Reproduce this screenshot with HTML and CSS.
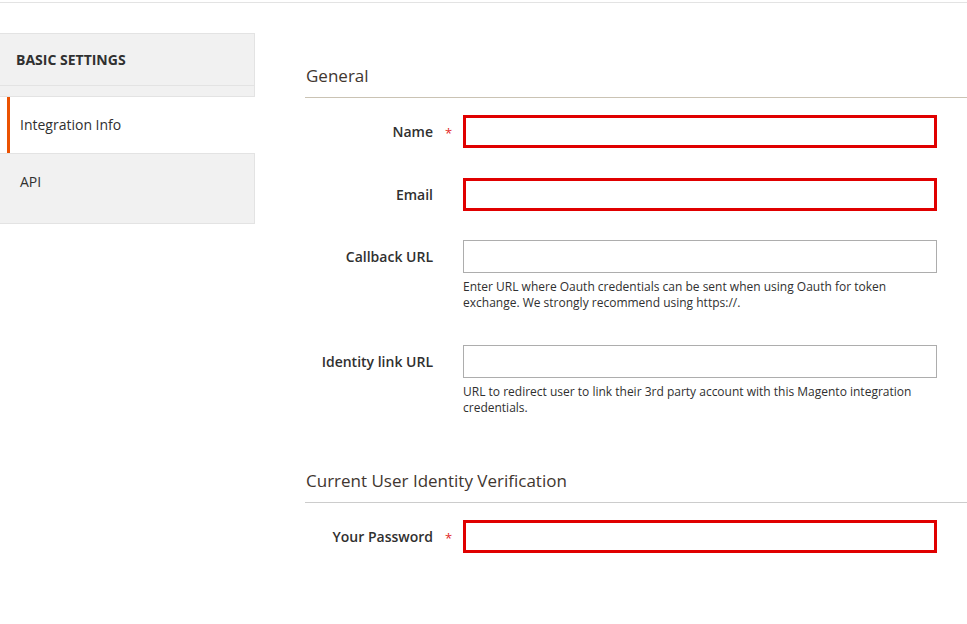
FILE: index.html
```html
<!DOCTYPE html>
<html lang="en">
<head>
<meta charset="utf-8">
<title>Integration Info</title>
<link rel="stylesheet" href="styles.css">
</head>
<body>
<div class="topbar"></div>
<div class="page">
  <aside class="sidebar">
    <div class="side-title">BASIC SETTINGS</div>
    <ul class="side-items">
      <li class="side-item active">Integration Info</li>
      <li class="side-item">API</li>
    </ul>
  </aside>
  <main class="main">
    <section class="section">
      <h2 class="section-title">General</h2>
      <div class="field">
        <label class="label">Name</label>
        <span class="req">*</span>
        <input class="input error" type="text">
      </div>
      <div class="field">
        <label class="label">Email</label>
        <span class="req"></span>
        <input class="input error" type="text">
      </div>
      <div class="field">
        <label class="label">Callback URL</label>
        <span class="req"></span>
        <input class="input" type="text">
        <div class="note">Enter URL where Oauth credentials can be sent when using Oauth for token exchange. We strongly recommend using https://.</div>
      </div>
      <div class="field">
        <label class="label">Identity link URL</label>
        <span class="req"></span>
        <input class="input" type="text">
        <div class="note">URL to redirect user to link their 3rd party account with this Magento integration credentials.</div>
      </div>
    </section>
    <section class="section second">
      <h2 class="section-title">Current User Identity Verification</h2>
      <div class="field">
        <label class="label">Your Password</label>
        <span class="req">*</span>
        <input class="input error" type="password">
      </div>
    </section>
  </main>
</div>
</body>
</html>
```
FILE: styles.css
```css
* { box-sizing: border-box; }
html, body { margin: 0; padding: 0; background: #fff; }
body {
  font-family: "Open Sans", "Liberation Sans", sans-serif;
  color: #303030;
  font-size: 14px;
}
.topbar {
  height: 3px;
  border-bottom: 1px solid #e3e3e3;
}
.page {
  display: flex;
  padding-top: 30px;
}
.sidebar {
  width: 255px;
  flex: none;
}
.side-title {
  height: 53px;
  background: #f1f1f1;
  border: 1px solid #e3e3e3;
  border-left: none;
  padding: 0 0 0 16px;
  display: flex;
  align-items: center;
  font-weight: 700;
  font-size: 14px;
  color: #303030;
  padding-bottom: 1px;
}
.side-items {
  list-style: none;
  margin: 0;
  padding: 10px 0 0;
  background: #f1f1f1;
  border-right: 1px solid #e3e3e3;
  border-bottom: 1px solid #e3e3e3;
}
.side-item {
  position: relative;
  padding-left: 20px;
  font-size: 14px;
  color: #303030;
}
.side-item.active {
  background: #fff;
  height: 57px;
  line-height: 56px;
  border-top: 1px solid #e3e3e3;
  margin-right: -1px;
}
.side-item.active::before {
  content: "";
  position: absolute;
  left: 7px;
  top: 0;
  bottom: 0;
  width: 3px;
  background: #eb5202;
}
.side-item:not(.active) {
  border-top: 1px solid #e3e3e3;
  height: 70px;
  padding-top: 18px;
  line-height: 20px;
}
.main {
  flex: 1;
  margin-left: 50px;
  padding-top: 32px;
}
.section-title {
  margin: 0 0 17px;
  font-size: 17px;
  font-weight: 400;
  line-height: 22px;
  color: #41362f;
  padding: 0 0 10px 1px;
  border-bottom: 1px solid #cac3b4;
}
.second { margin-top: 50px; }
.second .section-title { border-bottom-color: #cccccc; }
.field {
  display: grid;
  grid-template-columns: 128px 30px 474px;
  align-items: center;
  margin-bottom: 30px;
}
.field:nth-child(3) { margin-bottom: 29px; }
.label {
  text-align: right;
  font-weight: 600;
  font-size: 14px;
  color: #303030;
  padding-bottom: 1px;
}
.req {
  color: #e22626;
  font-size: 13px;
  text-align: center;
  padding-top: 3px;
  padding-left: 1px;
}
.input {
  height: 33px;
  border: 1px solid #adadad;
  background: #fff;
  margin: 0;
  padding: 0 10px;
  font: inherit;
  outline: none;
  border-radius: 0;
}
.input.error {
  border: 3px solid #e00000;
}
.note {
  grid-column: 3;
  margin: 6px 0 4px;
  font-size: 12px;
  line-height: 16px;
  color: #303030;
  padding-right: 10px;
}
```
